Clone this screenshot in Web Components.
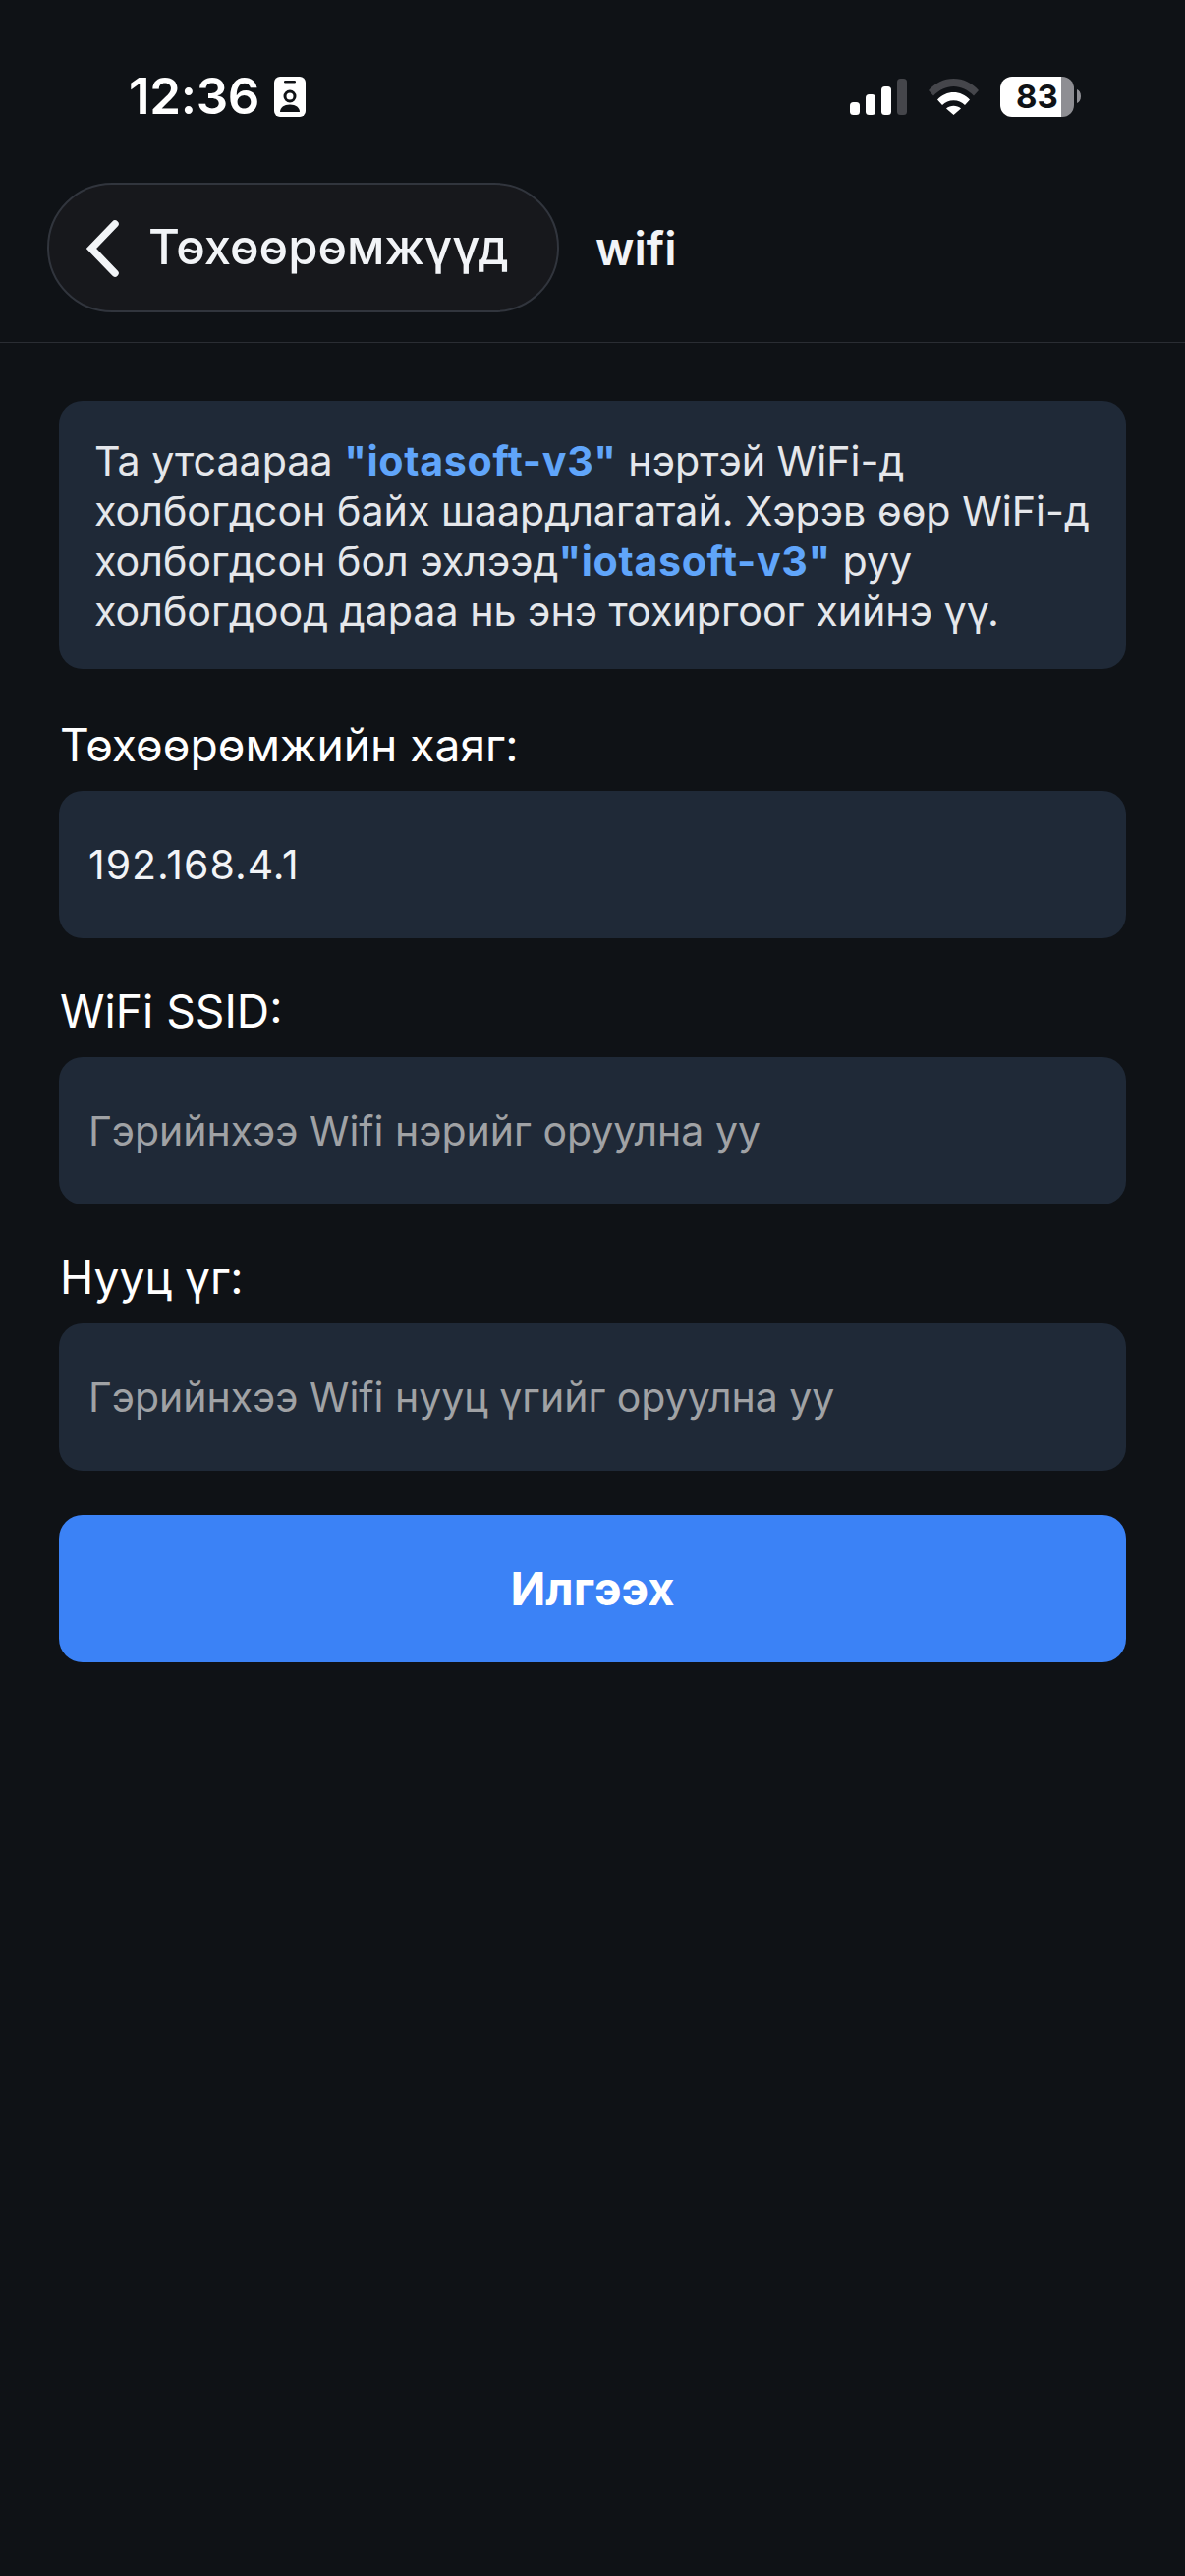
<!DOCTYPE html>
<html>
<head>
<meta charset="utf-8">
<title>wifi</title>
<style>
  html, body { margin: 0; padding: 0; background: #0f1216; }
  body { width: 1206px; height: 2622px; font-family: Inter, "Noto Sans", sans-serif; color: #f2f4f7; overflow: hidden; }
</style>
</head>
<body>
<app-screen>
  <status-bar></status-bar>
  <nav-header back="Төхөөрөмжүүд" title="wifi"></nav-header>
  <main-form>
    <info-card>Та утсаараа <b>"iotasoft-v3"</b> нэртэй WiFi-д<br>холбогдсон байх шаардлагатай. Хэрэв өөр WiFi-д<br>холбогдсон бол эхлээд<b>"iotasoft-v3"</b> руу<br>холбогдоод дараа нь энэ тохиргоог хийнэ үү.</info-card>
    <form-field label="Төхөөрөмжийн хаяг:" value="192.168.4.1"></form-field>
    <form-field label="WiFi SSID:" placeholder="Гэрийнхээ Wifi нэрийг оруулна уу"></form-field>
    <form-field label="Нууц үг:" placeholder="Гэрийнхээ Wifi нууц үгийг оруулна уу"></form-field>
    <send-button>Илгээх</send-button>
  </main-form>
</app-screen>
<script>
class AppScreen extends HTMLElement {
  connectedCallback() {
    let shadowRoot = this.attachShadow({ mode: "open" });
    shadowRoot.innerHTML = `
      <style>
        :host { display: flex; flex-direction: column; width: 1206px; height: 2622px; background: #0f1216; }
      </style>
      <slot></slot>
    `;
  }
}

class StatusBar extends HTMLElement {
  connectedCallback() {
    let shadowRoot = this.attachShadow({ mode: "open" });
    shadowRoot.innerHTML = `
      <style>
        :host { display: flex; align-items: center; justify-content: space-between; height: 100px; padding: 48px 106px 0 131px; }
        .left, .right { display: flex; align-items: center; }
        .time { font: 600 51px/60px Inter, sans-serif; color: #fff; letter-spacing: -0.3px; }
        .left svg { margin-left: 15px; }
        .right svg { display: block; }
        .wifi { margin-left: 22px; }
        .batt { margin-left: 22px; width: 75px; height: 41px; background: linear-gradient(90deg, #fff 0, #fff 62px, #8e8e93 62px); border-radius: 12px; display: flex; align-items: center; justify-content: center; font: 700 33px/41px Inter, sans-serif; color: #0f1216; }
        .nub { margin-left: 3px; }
      </style>
      <div class="left">
        <span class="time">12:36</span>
        <svg width="32" height="41" viewBox="0 0 32 41">
          <rect width="32" height="41" rx="6" fill="#fff"/>
          <rect x="10" y="4" width="12" height="2.500" rx="1.250" fill="#0f1216"/>
          <circle cx="16" cy="20" r="5" fill="none" stroke="#0f1216" stroke-width="3"/>
          <path d="M6 36c0-4.500 4-7.500 10-7.500s10 3 10 7.500z" fill="#0f1216"/>
        </svg>
      </div>
      <div class="right">
        <svg width="58" height="37" viewBox="0 0 58 37">
          <rect x="0" y="24" width="10" height="13" rx="3.500" fill="#fff"/>
          <rect x="16" y="16" width="10" height="21" rx="3.500" fill="#fff"/>
          <rect x="32" y="8" width="10" height="29" rx="3.500" fill="#fff"/>
          <rect x="48" y="0" width="10" height="37" rx="3.500" fill="#45464b"/>
        </svg>
        <svg class="wifi" width="51" height="37" viewBox="0 0 51 37">
          <path d="M0 12C6.500 4.500 15.500 0 25.500 0S44.500 4.500 51 12l-5 5.500C40 11.500 33 8 25.500 8S11 11.500 5 17.500z" fill="#45464b"/>
          <path d="M9 21.500C13.500 16.500 19.500 14 25.500 14S37.500 16.500 42 21.500l-5 5.500c-3-3-7-4.800-11.500-4.800S17 24 14 27z" fill="#fff"/>
          <path d="M18 30.500c2-1.700 4.800-2.700 7.500-2.700s5.500 1 7.500 2.700L25.500 37z" fill="#fff"/>
        </svg>
        <div class="batt">83</div>
        <svg class="nub" width="4" height="14" viewBox="0 0 4 14"><path d="M0 0c2.500 1 4 3.500 4 7s-1.500 6-4 7z" fill="#8e8e93"/></svg>
      </div>
    `;
  }
}

class NavHeader extends HTMLElement {
  connectedCallback() {
    let shadowRoot = this.attachShadow({ mode: "open" });
    shadowRoot.innerHTML = `
      <style>
        :host { display: flex; align-items: center; height: 132px; padding: 38px 0 30px 48px; border-bottom: 1px solid #2a2d33; }
        .back { display: flex; align-items: center; box-sizing: border-box; width: 521px; height: 132px; padding-left: 35px; border-radius: 66px; background: #17181c; border: 2px solid #31353d; }
        .back svg { display: block; margin-right: 30px; }
        .back span { font: 500 49px/60px Inter, sans-serif; color: #f2f4f7; white-space: nowrap; }
        .title { margin-left: 37px; margin-top: 2px; font: 600 47px/60px Inter, sans-serif; color: #f2f4f7; }
      </style>
      <div class="back">
        <svg width="36" height="64" viewBox="0 0 36 64"><path d="M32 8L8 33l24 25" fill="none" stroke="#f2f4f7" stroke-width="7.500" stroke-linecap="round"/></svg>
        <span>${this.getAttribute("back")}</span>
      </div>
      <div class="title">${this.getAttribute("title")}</div>
    `;
  }
}

class MainForm extends HTMLElement {
  connectedCallback() {
    let shadowRoot = this.attachShadow({ mode: "open" });
    shadowRoot.innerHTML = `
      <style>
        :host { display: flex; flex-direction: column; padding: 59px 60px 0; }
      </style>
      <slot></slot>
    `;
  }
}

class InfoCard extends HTMLElement {
  connectedCallback() {
    let shadowRoot = this.attachShadow({ mode: "open" });
    shadowRoot.innerHTML = `
      <style>
        :host { display: block; box-sizing: border-box; height: 273px; margin-bottom: 3px; padding: 36px 36px 0; border-radius: 24px; background: #1f2937; font: 400 41.200px/51px Inter, sans-serif; color: #e5e7eb; white-space: nowrap; }
        ::slotted(b) { font-weight: 700; color: #60a5fa; letter-spacing: 0.65px; }
      </style>
      <slot></slot>
    `;
  }
}

class FormField extends HTMLElement {
  connectedCallback() {
    let shadowRoot = this.attachShadow({ mode: "open" });
    const value = this.getAttribute("value");
    const text = value || this.getAttribute("placeholder");
    shadowRoot.innerHTML = `
      <style>
        :host { display: block; margin-top: 48px; }
        label { display: block; font: 400 46.200px/52px Inter, sans-serif; color: #fff; margin-left: 1px; margin-bottom: 21px; }
        .box { display: flex; align-items: center; box-sizing: border-box; height: 150px; padding: 0 30px; border-radius: 24px; background: #1f2937; font: 400 41px/50px Inter, sans-serif; white-space: nowrap; }
        .value { color: #f2f4f7; letter-spacing: 1px; }
        .placeholder { color: #a0a2a5; }
      </style>
      <label>${this.getAttribute("label")}</label>
      <div class="box ${value ? "value" : "placeholder"}">${text}</div>
    `;
  }
}

class SendButton extends HTMLElement {
  connectedCallback() {
    let shadowRoot = this.attachShadow({ mode: "open" });
    shadowRoot.innerHTML = `
      <style>
        :host { display: flex; align-items: center; justify-content: center; height: 150px; margin-top: 45px; border-radius: 24px; background: #3b82f6; font: 700 47px/60px Inter, sans-serif; color: #fff; }
      </style>
      <slot></slot>
    `;
  }
}

window.customElements.define("app-screen", AppScreen);
window.customElements.define("status-bar", StatusBar);
window.customElements.define("nav-header", NavHeader);
window.customElements.define("main-form", MainForm);
window.customElements.define("info-card", InfoCard);
window.customElements.define("form-field", FormField);
window.customElements.define("send-button", SendButton);
</script>
</body>
</html>
